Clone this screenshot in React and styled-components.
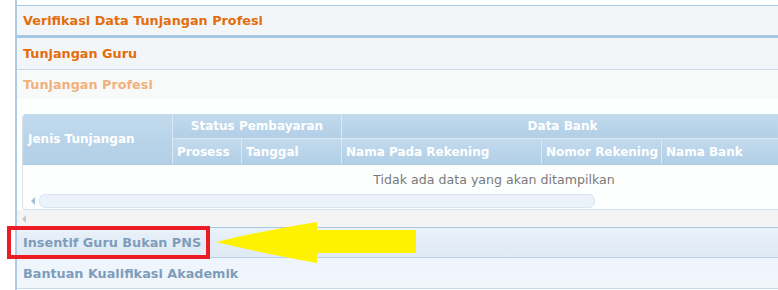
import React from 'react';
import styled, { createGlobalStyle, css } from 'styled-components';

const Global = createGlobalStyle`
  html, body { margin: 0; padding: 0; background: #ffffff; }
  body { font-family: "DejaVu Sans", Verdana, sans-serif; font-size: 12px; }
`;

const headerTones = {
  active: css`
    background: #f3f6f8;
    color: #e36d0c;
  `,
  faded: css`
    background: #f8f9f9;
    color: #f1b17c;
    border-top-left-radius: 4px;
  `,
  blue: css`
    background: linear-gradient(#e9f1f9, #dfeaf5);
    color: #7e9dba;
  `,
  pale: css`
    background: linear-gradient(#edf4fb, #f2f7fd);
    color: #7e9dba;
  `,
};

const App = () => {
  return (
    <Page>
      <Global />
      <Accordion>
        <Section tone="active" h={29} top="1px solid #a9c9e2" bottom="3px solid #a6c7e1">
          Verifikasi Data Tunjangan Profesi
        </Section>
        <Section tone="active" h={31} bottom="1px solid #c6dcec">
          Tunjangan Guru
        </Section>
        <Section tone="faded" h={29}>
          Tunjangan Profesi
        </Section>
        <Content>
          <GridBox>
            <HeadGrid>
              <HeadCell rows="1 / 3" style={{ gridColumn: '1' }}>Jenis Tunjangan</HeadCell>
              <HeadCell center style={{ gridColumn: '2 / 4' }}>Status Pembayaran</HeadCell>
              <HeadCell center style={{ gridColumn: '4 / 7' }}>Data Bank</HeadCell>
              <HeadCell sub>Prosess</HeadCell>
              <HeadCell sub>Tanggal</HeadCell>
              <HeadCell sub>Nama Pada Rekening</HeadCell>
              <HeadCell sub>Nomor Rekening</HeadCell>
              <HeadCell sub>Nama Bank</HeadCell>
            </HeadGrid>
            <Empty>Tidak ada data yang akan ditampilkan</Empty>
            <ScrollRow>
              <Arrow />
              <Track />
            </ScrollRow>
          </GridBox>
          <OuterScroll>
            <Arrow light />
          </OuterScroll>
        </Content>
        <Section tone="blue" h={29} top="1px solid #a9c9e2" bottom="1px solid #b7d2e8">
          Insentif Guru Bukan PNS
        </Section>
        <Section tone="pale" h={30} bottom="1px solid #c9dced">
          Bantuan Kualifikasi Akademik
        </Section>
      </Accordion>

      <Highlight />
      <Pointer viewBox="0 0 202 42" width="202" height="42">
        <path d="M0,20 Q50,8 101,0 L101,8 L200,8 L200,31 L101,31 L101,41 Q50,32 0,20 Z" fill="#fff200" />
      </Pointer>
    </Page>
  );
};

export default App;

const Page = styled.div`
  position: relative;
  width: 778px;
  height: 290px;
  overflow: hidden;
  padding-left: 15px;
  box-sizing: border-box;
`;

const Accordion = styled.div`
  border-left: 2px solid #aecbe3;
  padding-top: 5px;
  height: 100%;
  box-sizing: border-box;
`;

const Section = styled.div`
  ${(p) => headerTones[p.tone]}
  height: ${(p) => p.h}px;
  border-top: ${(p) => p.top || 'none'};
  border-bottom: ${(p) => p.bottom || 'none'};
  display: flex;
  align-items: center;
  padding-left: 6px;
  font-weight: bold;
  font-size: 12.8px;
  white-space: nowrap;
`;

const Content = styled.div`
  background: #fdfefe;
  padding-top: 15px;
  display: flex;
  flex-direction: column;
`;

const GridBox = styled.div`
  margin-left: 5px;
  width: 942px;
  border: 1px solid #d5e3ee;
  border-top: none;
  border-radius: 4px 0 0 4px;
  overflow: hidden;
  background: #fdfefe;
`;

const HeadGrid = styled.div`
  display: grid;
  grid-template-columns: 150px 69px 100px 200px 120px 122px;
  grid-template-rows: 25px 25px;
  width: 761px;
  border-bottom: 1px solid #a9cbe6;
  border-radius: 4px 0 0 0;
  overflow: hidden;
  background: linear-gradient(#c0d8ec, #b5d1e7);
`;

const HeadCell = styled.div`
  grid-row: ${(p) => p.rows || 'auto'};
  display: flex;
  align-items: center;
  justify-content: ${(p) => (p.center ? 'center' : 'flex-start')};
  padding-left: ${(p) => (p.center ? '0' : '4px')};
  border-right: 1px solid #dbe8f3;
  border-bottom: ${(p) => (p.center ? '1px solid #dbe8f3' : 'none')};
  background: linear-gradient(#c2daed, #b2cfe6);
  color: #ffffff;
  font-weight: bold;
  font-size: 12px;
  white-space: nowrap;
  overflow: hidden;
  &:first-child {
    padding-left: 5px;
  }
`;

const Empty = styled.div`
  height: 28px;
  display: flex;
  align-items: center;
  justify-content: center;
  color: #7a7a7a;
  font-size: 12.6px;
`;

const ScrollRow = styled.div`
  height: 16px;
  display: flex;
  align-items: center;
  padding-left: 8px;
  gap: 4px;
`;

const Arrow = styled.span`
  width: 0;
  height: 0;
  border-top: 4px solid transparent;
  border-bottom: 4px solid transparent;
  border-right: 4px solid ${(p) => (p.light ? '#c9c9c9' : '#a6bfd6')};
`;

const Track = styled.div`
  width: 556px;
  height: 14px;
  box-sizing: border-box;
  border: 1px solid #d9e6f2;
  border-radius: 6px;
  background: #ebf2fa;
`;

const OuterScroll = styled.div`
  height: 17px;
  background: #f4f4f4;
  display: flex;
  align-items: center;
  padding-left: 5px;
`;

const Highlight = styled.div`
  position: absolute;
  left: 7px;
  top: 226px;
  width: 203px;
  height: 33px;
  border: 4px solid #ed1c24;
  box-sizing: border-box;
`;

const Pointer = styled.svg`
  position: absolute;
  left: 216px;
  top: 222px;
`;
